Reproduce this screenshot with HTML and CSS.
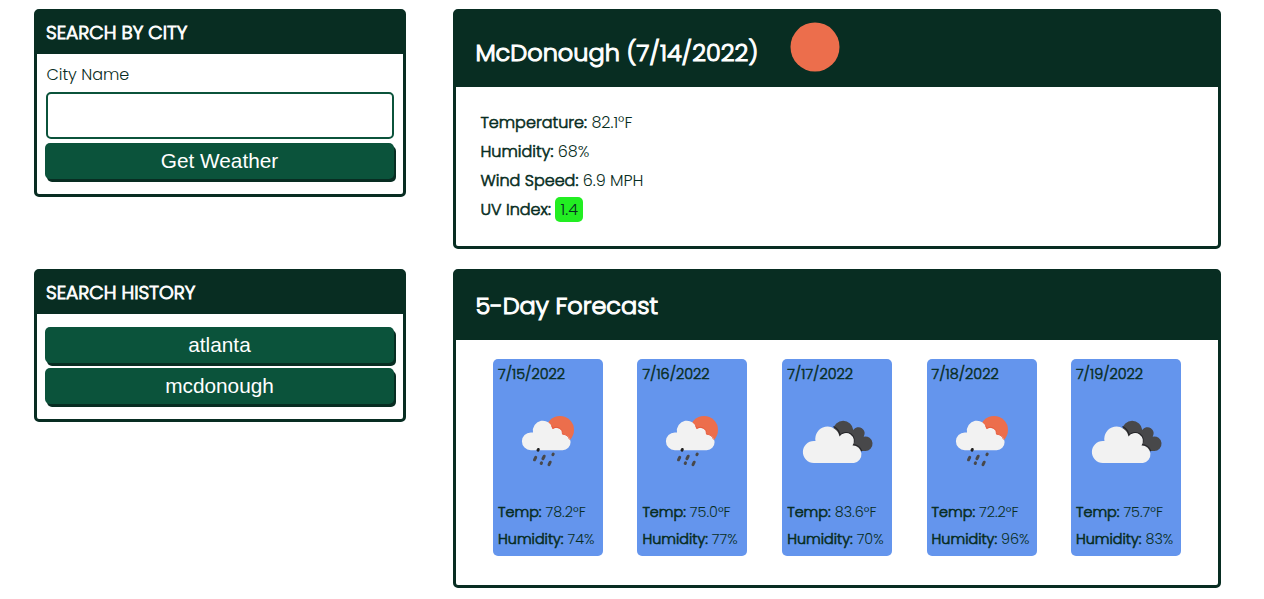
FILE: index.html
```html
<!DOCTYPE html>
<html lang="en">
<head>
<meta charset="utf-8">
<title>Weather Dashboard</title>
<link rel="stylesheet" href="styles.css">
</head>
<body>
<svg class="defs" aria-hidden="true">
  <symbol id="rain" viewBox="0 0 70 70">
    <circle cx="45" cy="25" r="14" fill="#ec6e4c"/>
    <path d="M15.8 45.200a8.900 8.900 0 0 1 0-17.800h2.200a10 10 0 0 1 19.700-3.500a6.200 6.200 0 0 1 9.800 5.300a7.800 7.800 0 0 1 .200 16z" fill="#f2f2f2"/>
    <path d="M36.500 20.500l1.200 3a6.200 6.200 0 0 1 9.800 5.700a7.800 7.800 0 0 1 7 5.400" fill="none" stroke="#e65032" stroke-width=".8"/>
    <g stroke="#48484a" stroke-width="3" stroke-linecap="round">
      <path d="M23 45.200l.3-.7" stroke="#222"/><path d="M20.700 52.300l-1.200 2.500M29.200 51.200l-1.300 2.500M38.200 49.100l-.3.600M26.500 57.900l-.3.600M35.200 57.200l-1.200 2.400"/>
    </g>
  </symbol>
  <symbol id="clouds" viewBox="0 0 85 70">
    <path d="M38 25a10.200 10.200 0 0 1 20.300 0a5.700 5.700 0 0 1 10.400 6.700a7.200 7.200 0 1 1 1.300 14.200h-12l-19-14z" fill="#48484a"/>
    <path d="M38.500 21.500a12 12 0 0 1 6.600 9.200a7.600 7.600 0 0 1 12.500 9a9.200 9.200 0 0 1 9.200 6.500" fill="none" stroke="#242427" stroke-width="1.200"/>
    <path d="M18.800 57.900a10.850 10.850 0 0 1 0-21.800h1.700a12.100 12.100 0 0 1 24-4.600a7.400 7.400 0 0 1 13 9a8.750 8.750 0 0 1 1.500 17.400z" fill="#f2f2f2"/>
  </symbol>
</svg>
<main class="dashboard">
  <section class="card">
    <h2 class="card-title">SEARCH BY CITY</h2>
    <form class="search">
      <label class="label" for="city">City Name</label>
      <input class="field" id="city" type="text">
      <button class="btn" type="button">Get Weather</button>
    </form>
  </section>
  <section class="card">
    <h1 class="main-title current-title"><span class="city">McDonough (7/14/2022)</span><svg class="sun" viewBox="0 0 50 50"><circle cx="25" cy="25" r="24.500" fill="#ec6e4c"/></svg></h1>
    <div class="current">
      <p class="row"><b>Temperature:</b> 82.1°F</p>
      <p class="row"><b>Humidity:</b> 68%</p>
      <p class="row"><b>Wind Speed:</b> 6.9 MPH</p>
      <p class="row"><b>UV Index:</b> <span class="uv">1.4</span></p>
    </div>
  </section>
  <section class="card">
    <h2 class="card-title">SEARCH HISTORY</h2>
    <div class="history">
      <button class="btn" type="button">atlanta</button>
      <button class="btn" type="button">mcdonough</button>
    </div>
  </section>
  <section class="card">
    <h1 class="main-title forecast-title">5-Day Forecast</h1>
    <div class="forecast">
      <article class="day"><h3 class="date">7/15/2022</h3><svg class="icon-rain"><use href="#rain"/></svg><p class="stat"><b>Temp:</b> 78.2°F</p><p class="stat"><b>Humidity:</b> 74%</p></article>
      <article class="day"><h3 class="date">7/16/2022</h3><svg class="icon-rain"><use href="#rain"/></svg><p class="stat"><b>Temp:</b> 75.0°F</p><p class="stat"><b>Humidity:</b> 77%</p></article>
      <article class="day"><h3 class="date">7/17/2022</h3><svg class="icon-clouds"><use href="#clouds"/></svg><p class="stat"><b>Temp:</b> 83.6°F</p><p class="stat"><b>Humidity:</b> 70%</p></article>
      <article class="day"><h3 class="date">7/18/2022</h3><svg class="icon-rain"><use href="#rain"/></svg><p class="stat"><b>Temp:</b> 72.2°F</p><p class="stat"><b>Humidity:</b> 96%</p></article>
      <article class="day"><h3 class="date">7/19/2022</h3><svg class="icon-clouds"><use href="#clouds"/></svg><p class="stat"><b>Temp:</b> 75.7°F</p><p class="stat"><b>Humidity:</b> 83%</p></article>
    </div>
  </section>
</main>
</body>
</html>
```
FILE: styles.css
```css
* { box-sizing: border-box; margin: 0; padding: 0; }
body { background: #fff; color: #082d22; font-family: Poppins, Inter, "Open Sans", sans-serif; font-size: 16px; font-weight: 300; overflow: hidden; }
.defs { display: none; }
.dashboard { display: grid; grid-template-columns: 372px 768px; grid-template-rows: 240px 319px; gap: 20px 47px; align-items: start; padding: 9px 0 0 34px; }
.card { border: 3px solid #082d22; border-radius: 5px; }
.card:nth-child(even) { height: 100%; }
.card-title { height: 42px; padding-left: 9px; background: #082d22; color: #fff; font-size: 18.72px; font-weight: 300; line-height: 42px; -webkit-text-stroke: 0.9px; }
.search { display: flex; flex-direction: column; height: 140px; padding: 8px 9px 0 8px; }
.label { padding-left: 1.4px; line-height: 25px; }
.field { width: 348px; height: 47px; margin: 5px 0 4px 1px; border: 2px solid #0b533b; border-radius: 5px; background: #fff; }
.btn { display: block; width: 349px; height: 36px; border: 0; border-radius: 5px; background: #0b533b; box-shadow: 2px 3px 0 #082d22; color: #fff; font-family: "Liberation Sans", Arial, sans-serif; font-size: 20.8px; }
.history { display: grid; gap: 5px; height: 105px; padding: 13px 8px 15px; }
.main-title { display: flex; align-items: center; padding-left: 19.4px; background: #082d22; color: #fff; font-size: 24px; font-weight: 300; -webkit-text-stroke: 1.1px; }
.current-title { height: 75px; padding-top: 6px; }
.city { width: 314.6px; white-space: nowrap; }
.sun { width: 50px; height: 50px; margin-top: -12px; }
.forecast-title { height: 68px; padding-bottom: 2px; }
.current { padding: 21px 24.5px; }
.row { height: 29px; line-height: 29px; }
.row b, .stat b { font-weight: 300; -webkit-text-stroke: 0.6px; }
.uv { display: inline-block; width: 28px; height: 25px; border-radius: 5px; background: #22ee22; line-height: 25px; text-align: center; }
.forecast { display: flex; justify-content: space-between; padding: 19px 37px 0; }
.day { width: 110px; height: 197px; padding: 2px 5px 0; border-radius: 5px; background: #6495ed; }
.day:nth-child(2) { margin-right: 0.4px; }
.date { height: 27px; font-size: 14.4px; font-weight: 300; line-height: 27px; -webkit-text-stroke: 0.5px; }
.icon-rain, .icon-clouds { display: block; height: 70px; margin: 17px 0 24px; }
.icon-rain { width: 70px; margin-left: 17px; }
.icon-clouds { width: 85px; margin-left: 8px; }
.stat { height: 27px; font-size: 14.4px; line-height: 27px; white-space: nowrap; }
```
